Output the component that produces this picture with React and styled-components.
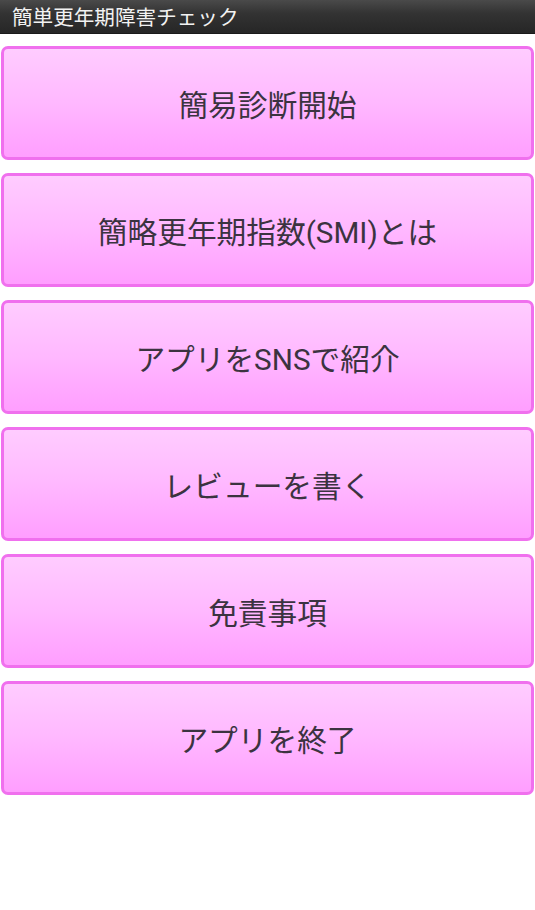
import React from "react";
import styled, { createGlobalStyle } from "styled-components";

const Global = createGlobalStyle`
  html, body { margin: 0; padding: 0; background: #ffffff; }
  body { font-family: Roboto, "Noto Sans CJK JP", sans-serif; }
`;

const Page = styled.div`
  width: 535px;
  min-height: 910px;
  background: #ffffff;
`;

const TitleBar = styled.div`
  height: 34px;
  box-sizing: border-box;
  padding: 0 12px;
  display: flex;
  align-items: center;
  background: linear-gradient(#4a4a4a 0%, #333333 40%, #262626 100%);
  border-bottom: 1px solid #1a1a1a;
  color: #f2f2f2;
  font-family: "Noto Sans CJK JP", sans-serif;
  font-size: 20.6px;
  line-height: 1;
`;

const Menu = styled.div`
  display: flex;
  flex-direction: column;
  gap: 13px;
  padding: 12px 1px 0 1px;
`;

const MenuButton = styled.button`
  height: 114px;
  width: 100%;
  box-sizing: border-box;
  border: 3px solid #f070ee;
  border-radius: 7px;
  background: linear-gradient(#ffccff 0%, #ffb8ff 50%, #ff9eff 100%);
  color: #3b3340;
  font-family: Roboto, "Noto Sans CJK JP", sans-serif;
  font-size: 29.7px;
  display: flex;
  align-items: center;
  justify-content: center;
  padding: 0;
  cursor: pointer;
`;

const items = [
  "簡易診断開始",
  "簡略更年期指数(SMI)とは",
  "アプリをSNSで紹介",
  "レビューを書く",
  "免責事項",
  "アプリを終了",
];

export default function App() {
  return (
    <Page>
      <Global />
      <TitleBar>簡単更年期障害チェック</TitleBar>
      <Menu>
        {items.map((t) => (
          <MenuButton key={t}>{t}</MenuButton>
        ))}
      </Menu>
    </Page>
  );
}
